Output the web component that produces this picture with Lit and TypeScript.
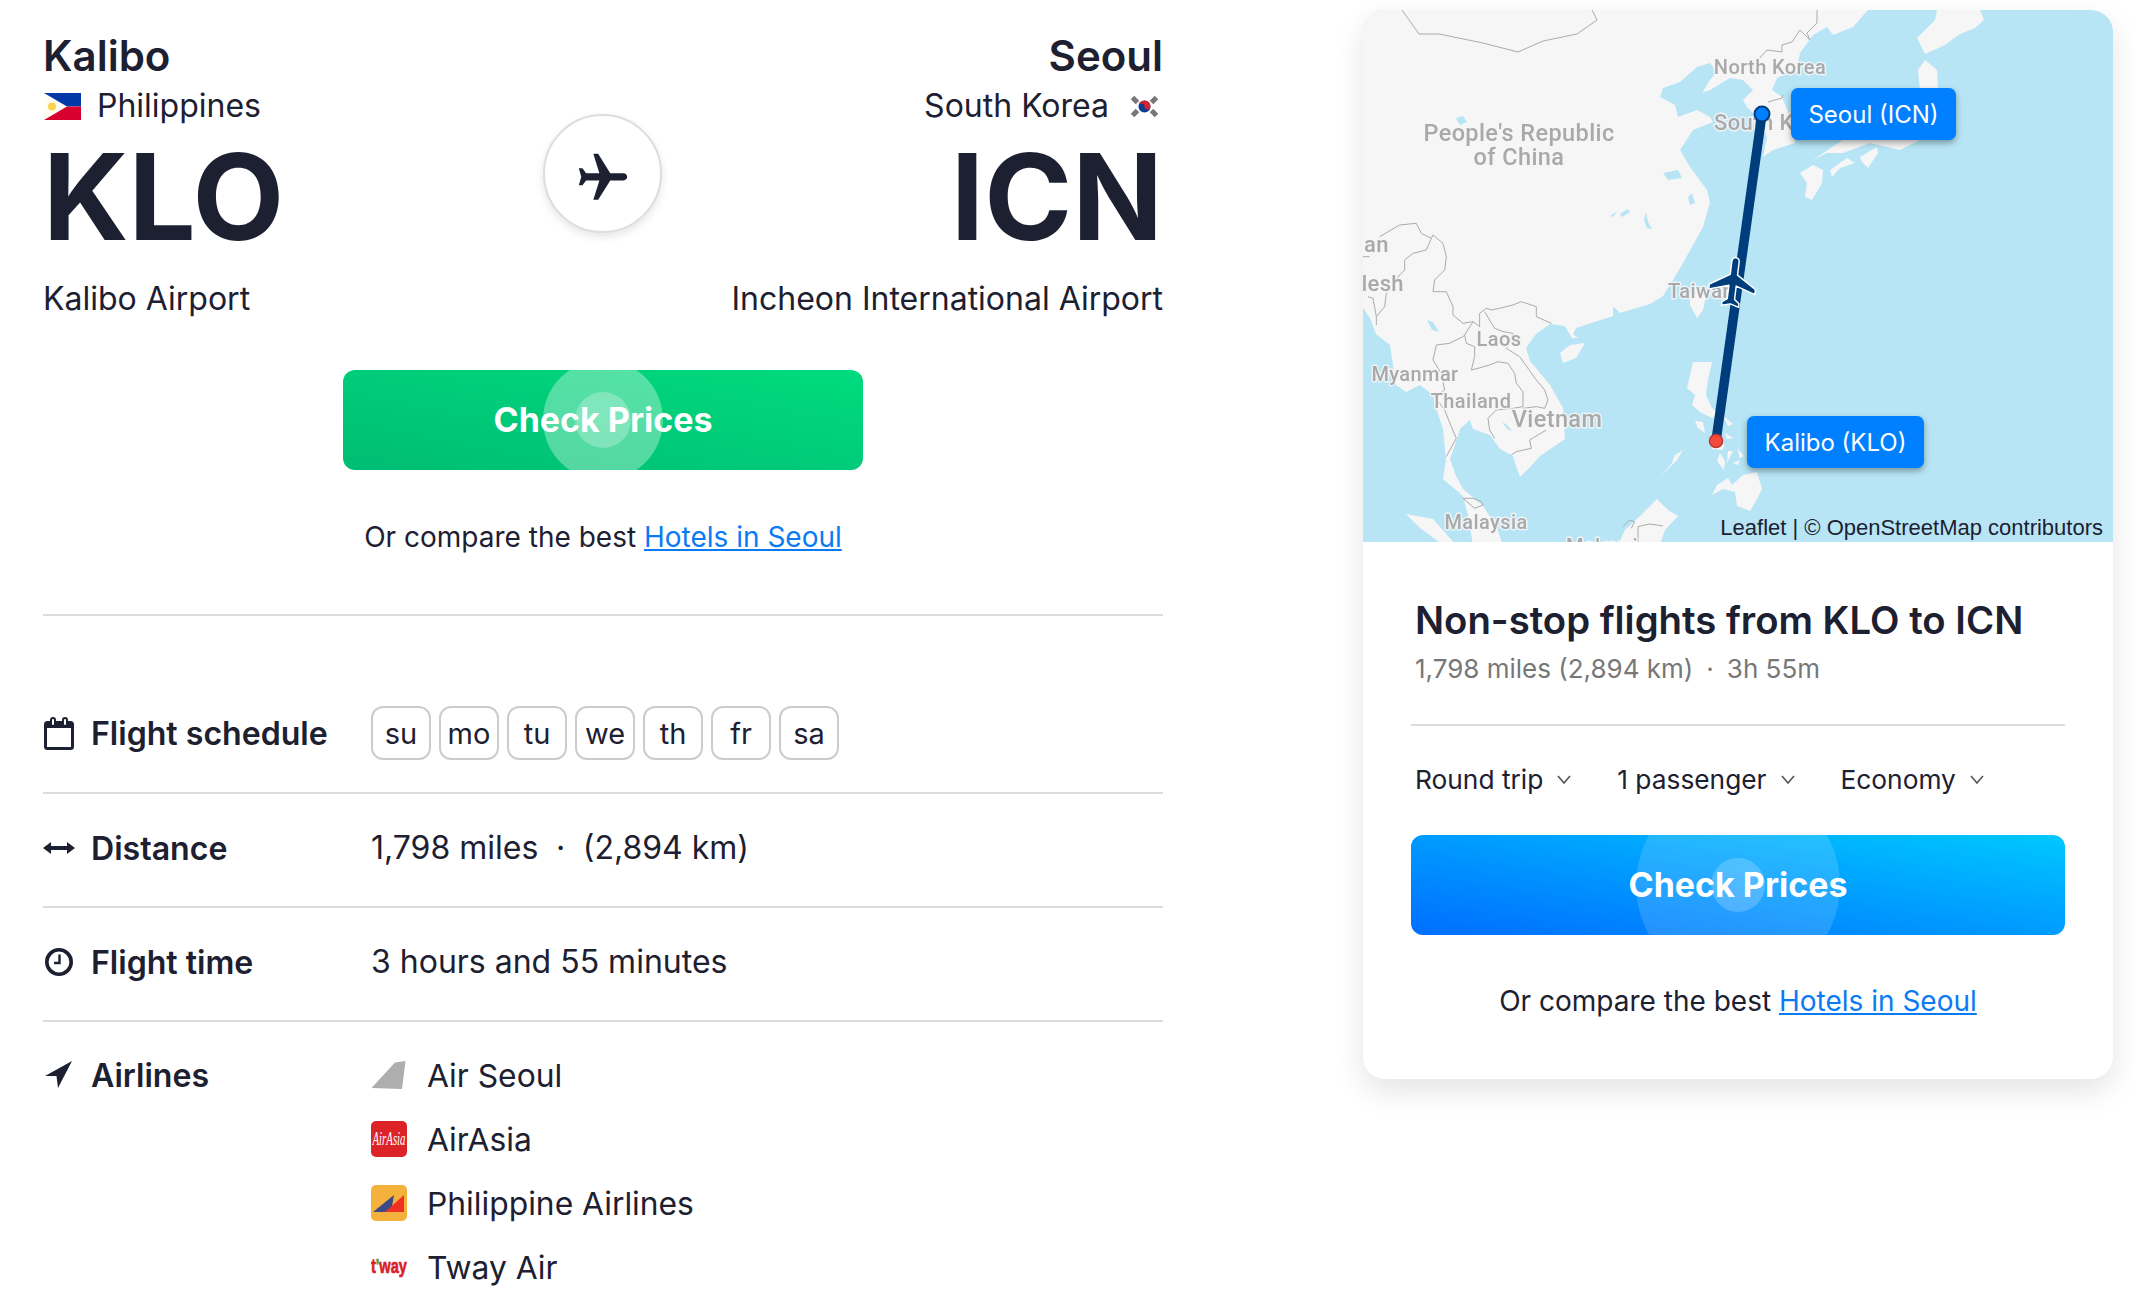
import { LitElement, html, css, svg } from "lit";
import { customElement } from "lit/decorators.js";

const PLANE = "M21 16v-2l-8-5V3.5c0-.83-.67-1.5-1.5-1.5S10 2.67 10 3.5V9l-8 5v2l8-2.5V19l-2 1.5V22l3.5-1 3.5 1v-1.5L13 19v-5.5l8 2.5z";

const LAND: string[] = [
  "1363,10 1868,10 1853,27 1833,35 1827,27 1813,35 1800,53 1797,67 1777,78 1772,90 1782,97 1790,117 1795,143 1773,150 1763,157 1767,137 1757,117 1747,107 1743,100 1753,90 1743,80 1730,78 1710,90 1702,93 1710,80 1717,72 1710,63 1697,67 1680,82 1663,88 1660,97 1675,105 1678,117 1697,110 1710,117 1713,122 1693,130 1680,150 1690,167 1707,190 1710,203 1703,227 1683,263 1673,280 1663,296 1650,304 1620,313 1613,306 1613,316 1576,328 1573,334 1578,338 1572,338 1565,326 1550,324 1536,334 1526,348 1530,361 1550,385 1563,408 1565,439 1540,456 1531,466 1520,477 1516,466 1513,456 1500,449 1490,435 1473,429 1470,420 1460,429 1456,442 1450,459 1456,476 1463,489 1483,506 1496,526 1503,545 1473,545 1468,515 1463,496 1443,479 1446,459 1443,429 1436,408 1433,395 1420,385 1406,392 1396,385 1390,345 1376,334 1370,318 1363,308",
  "1585,343 1576,358 1563,363 1560,353 1570,345",
  "1406,514 1433,519 1456,545 1443,545 1420,528",
  "1618,545 1625,530 1640,516 1657,499 1668,510 1678,516 1665,530 1660,545",
  "1693,362 1712,362 1708,380 1706,395 1712,408 1720,414 1712,418 1700,412 1692,405 1695,395 1687,388 1690,375",
  "1695,421 1703,422 1705,433 1698,428",
  "1712,440 1725,445 1722,450 1712,449",
  "1723,416 1733,424 1728,426",
  "1725,433 1733,438 1727,439",
  "1737,448 1744,456 1740,458",
  "1720,453 1717,461 1724,470 1725,461",
  "1728,451 1733,451 1727,463",
  "1733,463 1740,460 1738,465",
  "1712,495 1717,485 1728,478 1732,485 1743,475 1757,472 1762,489 1757,499 1750,511 1737,506 1735,492 1723,489",
  "1683,450 1677,460 1660,477 1672,463 1675,455",
  "1695,288 1706,296 1703,310 1697,318 1690,305 1690,295",
  "1800,173 1813,165 1823,170 1822,183 1812,200 1805,197 1807,183",
  "1813,160 1827,153 1843,153 1870,143 1900,150 1918,141 1945,100 1938,88 1937,70 1925,60 1918,70 1920,90 1905,110 1880,125 1850,135",
  "1830,170 1847,158 1855,163 1840,168 1832,177",
  "1860,157 1877,147 1878,153 1868,168 1862,162",
  "1937,10 1980,10 1984,20 1975,28 1960,34 1945,45 1925,54 1917,38 1925,30 1935,20",
];

const LAKES: string[] = [
  "1456,118 1463,116 1467,122 1460,125",
  "1611,215 1617,212 1612,218",
  "1620,214 1628,209 1630,212 1622,217",
  "1646,212 1648,222 1652,229 1647,228 1644,220",
  "1663,173 1678,170 1682,178 1668,180",
  "1688,197 1692,193 1695,203 1690,205",
  "1427,320 1433,322 1439,332 1432,330",
];

const BORDERS_Z9: string[] = [
  "50,110 110,75 160,70 175,100 205,115 210,105 240,130 250,170 245,210 215,240 210,275 250,275 270,320 270,345 300,370 330,365 305,405 300,410 260,430 220,435 210,480 235,520 245,570 215,590 245,630 265,680 280,715 250,770",
  "205,115 190,150 150,160 125,180 125,210 110,225 70,280 65,320 40,350 40,375",
  "15,290 30,295 40,350",
  "0,170 20,170",
  "330,365 350,380 350,340 370,325 385,330 410,325 450,315 475,305 520,320 520,350 565,370",
  "365,335 395,385 420,395 450,400 430,445 470,470 520,540 545,570 555,600 545,625 520,620 480,625",
  "305,405 310,430 335,440 335,470 325,510 345,505 380,495 405,485 435,490 455,520 460,550 480,575 480,620 450,625 400,630 375,655 380,690 395,715",
  "550,690 500,720 505,745 460,755 445,765",
  "300,895 330,895 355,905 360,915 335,925 300,895",
  "780,980 800,960 815,965 805,985",
  "825,1026 825,980 860,972 900,978",
];

const BORDERS_PAGE: string[] = [
  "1402,10 1419,34 1439,34 1483,43 1518,52 1543,41 1577,34 1597,20 1592,10",
  "1817,10 1817,23 1807,33 1810,40 1800,30 1792,42 1782,45 1782,52 1767,50 1758,60",
  "1768,102 1782,98 1783,95",
];

@customElement("flight-map")
class FlightMap extends LitElement {
  static styles = css`
    :host { display: block; position: relative; height: 532px; overflow: hidden; background: #b7e5f6; }
    svg.base { display: block; width: 750px; height: 532px; }
    .land { fill: #f6f6f6; }
    .lake { fill: #b7e5f6; }
    .border { fill: none; stroke: #ababab; stroke-width: 1; vector-effect: non-scaling-stroke; }
    .soft { filter: blur(0.35px); }
    .place {
      font-family: Roboto, sans-serif; font-weight: 500; font-size: 20px; letter-spacing: 0.4px;
      fill: #a9a9a9; stroke: rgba(246,246,246,.85); stroke-width: 3px; paint-order: stroke; stroke-linejoin: round;
    }
    .place.big { font-size: 23.5px; }
    .place.mid { font-size: 22px; }
    .route { stroke: #003d7c; stroke-width: 9.5; }
    .plane { fill: #003d7c; stroke: #fff; stroke-width: .6; stroke-linejoin: round; }
    .pill {
      position: absolute; display: flex; align-items: center; justify-content: center; height: 52px;
      background: #0080ff; color: #fff; border-radius: 7px; box-shadow: 0 3px 6px rgba(0,0,0,.35);
      font: 400 24px Inter, sans-serif; white-space: nowrap;
    }
    .seoul { left: 428px; top: 78px; width: 165px; }
    .kalibo { left: 384px; top: 406px; width: 177px; }
    .attr {
      position: absolute; right: 10px; bottom: 0; color: #1c2030;
      font: 400 22px/28px "Liberation Sans", sans-serif; white-space: nowrap;
    }
  `;
  render() {
    return html`
      <svg class="base" viewBox="1363 10 750 532">
        <g class="soft">
          ${LAND.map((p) => svg`<polygon class="land" points=${p}></polygon>`)}
          ${LAKES.map((p) => svg`<polygon class="lake" points=${p}></polygon>`)}
          ${BORDERS_PAGE.map((p) => svg`<polyline class="border" points=${p}></polyline>`)}
          <g transform="translate(1363 200) scale(.3333)">
            ${BORDERS_Z9.map((p) => svg`<polyline class="border" points=${p}></polyline>`)}
            <polygon class="lake" points="418,668 430,672 446,692 436,690"></polygon>
          </g>
          <text class="place big" x="1519" y="141" text-anchor="middle">People's Republic</text>
          <text class="place big" x="1519" y="165" text-anchor="middle">of China</text>
          <text class="place" x="1770" y="74" text-anchor="middle">North Korea</text>
          <text class="place mid" x="1714" y="130">South Korea</text>
          <text class="place mid" x="1389" y="252" text-anchor="end">Bhutan</text>
          <text class="place mid" x="1404" y="291" text-anchor="end">Bangladesh</text>
          <text class="place" x="1499" y="346" text-anchor="middle">Laos</text>
          <text class="place" x="1415" y="381" text-anchor="middle">Myanmar</text>
          <text class="place" x="1471" y="408" text-anchor="middle">Thailand</text>
          <text class="place big" x="1557" y="427" text-anchor="middle">Vietnam</text>
          <text class="place" x="1486" y="529" text-anchor="middle">Malaysia</text>
          <text class="place" x="1566" y="553">Malaysia</text>
          <text class="place" x="1668" y="298">Taiwan</text>
        </g>
        <line class="route" x1="1716" y1="441" x2="1762" y2="114"></line>
        <circle cx="1762" cy="114" r="7.5" fill="#0080ff" stroke="#003d7c" stroke-width="2"></circle>
        <circle cx="1716" cy="441" r="6.5" fill="#f4493d" stroke="#c0392f" stroke-width="1.5"></circle>
        <g transform="translate(1733 282) rotate(7) scale(2.45) translate(-11.5 -12)">
          <path class="plane" d=${PLANE}></path>
        </g>
      </svg>
      <div class="pill seoul">Seoul (ICN)</div>
      <div class="pill kalibo">Kalibo (KLO)</div>
      <div class="attr">Leaflet | © OpenStreetMap contributors</div>
    `;
  }
}

@customElement("cta-button")
class CtaButton extends LitElement {
  static styles = css`
    :host { display: block; }
    button {
      position: relative; display: flex; align-items: center; justify-content: center; width: 100%; height: 100px;
      border: 0; border-radius: 12px; overflow: hidden; color: #fff; padding: 0;
      font: 700 34px Inter, sans-serif; cursor: pointer;
    }
    button.green { background: linear-gradient(to top right, #00bd73, #00db7e); }
    button.blue { background: linear-gradient(to top right, #006eff, #00c8ff); }
    .ring { position: absolute; left: 50%; top: 50%; border-radius: 50%; transform: translate(-50%, -50%); }
    .green .outer { width: 120px; height: 120px; background: rgba(255,255,255,.33); }
    .green .inner { width: 56px; height: 56px; background: rgba(255,255,255,.26); }
    .blue .outer { width: 204px; height: 204px; background: rgba(255,255,255,.14); }
    .blue .inner { width: 54px; height: 54px; background: rgba(255,255,255,.2); }
    span.label { position: relative; top: -1px; }
  `;
  static properties = { tone: { type: String } };
  tone = "green";
  render() {
    return html`<button class=${this.tone}>
      <span class="ring outer"></span><span class="ring inner"></span>
      <span class="label">Check Prices</span>
    </button>`;
  }
}

@customElement("app-root")
class AppRoot extends LitElement {
  static styles = css`
    :host {
      display: block; width: 2134px; height: 1304px; overflow: hidden; background: #fff;
      color: #1c2030; font-family: Inter, sans-serif;
    }
    .page { display: flex; padding-left: 43px; }
    .left { width: 1120px; flex: none; padding-top: 31px; }
    .route { display: grid; grid-template-columns: 1fr 120px 1fr; }
    .side.end { text-align: right; }
    .city { font-size: 42px; line-height: 50px; font-weight: 600; }
    .country { display: flex; align-items: center; gap: 17px; font-size: 32px; line-height: 40px; margin-top: 5px; }
    .country .ph { margin-left: 1px; }
    .side:not(.end) .country { gap: 16px; }
    .end .country { justify-content: flex-end; gap: 17px; }
    .code { font-size: 119px; line-height: 120px; font-weight: 700; margin-top: 11px; }
    .airport { font-size: 32px; line-height: 40px; margin-top: 22px; white-space: nowrap; }
    .hub {
      width: 119px; height: 119px; box-sizing: border-box; margin: 83px 0 0 0; border-radius: 50%;
      border: 2px solid #ddd; background: #fff; box-shadow: 0 4px 9px rgba(0,0,0,.1);
      display: flex; align-items: center; justify-content: center;
    }
    .hub svg { width: 58px; height: 58px; fill: #1c2030; margin-top: 9px; }
    .cta { width: 520px; margin: 51px auto 0; }
    .more { text-align: center; font-size: 28px; line-height: 40px; margin-top: 47px; }
    .more a { color: #0a7bf5; text-decoration: underline; }
    .rule { height: 2px; background: #ddd; margin-top: 57px; }
    .rows { margin-top: 64px; }
    .row { display: flex; padding: 26px 0 32px; border-bottom: 2px solid #ddd; }
    .row:last-child { border-bottom: 0; }
    .key { width: 328px; flex: none; display: flex; align-items: center; height: 54px; font-size: 32.1px; font-weight: 600; }
    .row.text .key, .row.text .val { position: relative; top: 1px; }
    .icon { width: 48px; flex: none; display: flex; align-items: center; }
    .icon .cal { margin-left: 1px; }
    .val { font-size: 32px; line-height: 54px; }
    .dot { margin: 0 .55em; }
    .days { display: flex; gap: 8px; }
    .day {
      width: 60px; height: 54px; box-sizing: border-box; border: 2px solid #ccc; border-radius: 12px;
      display: flex; align-items: center; justify-content: center; font-size: 29px;
    }
    .airlines { display: flex; flex-direction: column; gap: 10px; }
    .airline { display: flex; align-items: center; height: 54px; gap: 20px; font-size: 31.8px; }
    .airline svg { width: 36px; height: 36px; flex: none; display: block; }
    .card {
      width: 750px; height: 1069px; flex: none; margin: 10px 0 0 200px; border-radius: 22px; overflow: hidden;
      background: #fff; box-shadow: 0 12px 30px rgba(0,0,0,.11);
    }
    .body { padding: 53px 48px 0; }
    .title { font-size: 38.3px; line-height: 50px; font-weight: 600; margin-left: 4px; white-space: nowrap; }
    .sub { font-size: 26px; line-height: 36px; color: #777; margin: 6px 0 0 4px; }
    .sub .dot { margin: 0 .5em; }
    .body .rule { margin-top: 37px; }
    .opts { display: flex; align-items: center; height: 36px; margin: 36px 0 37px 4px; font-size: 26.3px; position: relative; top: -1px; }
    .opt { display: flex; align-items: center; gap: 14px; margin-right: 46px; white-space: nowrap; }
    .opt svg { width: 14px; height: 9px; fill: none; stroke: #555; stroke-width: 1.6; }
    .card .more { margin-top: 46px; }
  `;

  private days = ["su", "mo", "tu", "we", "th", "fr", "sa"];

  private flagPH() {
    return html`<svg class="ph" width="37" height="27" viewBox="0 0 37 27" style="flex:none">
      <rect width="37" height="13.5" fill="#0038a8"></rect>
      <rect y="13.5" width="37" height="13.5" fill="#d8002f"></rect>
      <polygon points="0,0 23,13.5 0,27" fill="#fdfdf5"></polygon>
      <circle cx="8" cy="13.5" r="4" fill="#fcd34d"></circle>
    </svg>`;
  }

  private flagKR() {
    const bars = [[9, 7, 45], [28, 7, -45], [9, 20, -45], [28, 20, 45]];
    return html`<svg width="37" height="27" viewBox="0 0 37 27" style="flex:none">
      <rect width="37" height="27" fill="#fff"></rect>
      ${bars.map(([x, y, r]) => svg`<rect x=${x - 3.5} y=${y - 2.5} width="7" height="5" fill="#777" transform="rotate(${r} ${x} ${y})"></rect>`)}
      <circle cx="18.5" cy="13.5" r="6" fill="#0b3d91"></circle>
      <path d="M12.5 13.5a6 6 0 0 1 12 0 3 3 0 0 1-6 0 3 3 0 0 0-6 0z" fill="#d8232f"></path>
    </svg>`;
  }

  private chevron() {
    return html`<svg viewBox="0 0 14 9"><path d="M1 1l6 7 6-7"></path></svg>`;
  }

  render() {
    return html`
      <div class="page">
        <div class="left">
          <div class="route">
            <div class="side">
              <div class="city">Kalibo</div>
              <div class="country">${this.flagPH()}<span>Philippines</span></div>
              <div class="code">KLO</div>
              <div class="airport">Kalibo Airport</div>
            </div>
            <div class="hub"><svg viewBox="0 0 24 24"><path transform="rotate(90 12 12)" d=${PLANE}></path></svg></div>
            <div class="side end">
              <div class="city">Seoul</div>
              <div class="country"><span>South Korea</span>${this.flagKR()}</div>
              <div class="code">ICN</div>
              <div class="airport">Incheon International Airport</div>
            </div>
          </div>
          <div class="cta"><cta-button tone="green"></cta-button></div>
          <div class="more">Or compare the best <a href="#">Hotels in Seoul</a></div>
          <div class="rule"></div>
          <div class="rows">
            <div class="row">
              <div class="key">
                <span class="icon"><svg class="cal" width="30" height="33" viewBox="0 0 30 33">
                  <rect x="1.5" y="5.5" width="27" height="26" rx="2" fill="none" stroke="#1c2030" stroke-width="3"></rect>
                  <rect x="1.5" y="5.5" width="27" height="5.5" fill="#1c2030"></rect>
                  <rect x="7" y="1" width="4" height="8" rx="2" fill="#fff" stroke="#1c2030" stroke-width="2"></rect>
                  <rect x="19" y="1" width="4" height="8" rx="2" fill="#fff" stroke="#1c2030" stroke-width="2"></rect>
                </svg></span>Flight schedule
              </div>
              <div class="days">${this.days.map((d) => html`<div class="day">${d}</div>`)}</div>
            </div>
            <div class="row text">
              <div class="key">
                <span class="icon"><svg width="32" height="14" viewBox="0 0 32 14">
                  <path d="M6 7h20" stroke="#1c2030" stroke-width="4"></path>
                  <path d="M0 7l8-6v12zM32 7l-8-6v12z" fill="#1c2030"></path>
                </svg></span>Distance
              </div>
              <div class="val">1,798 miles<span class="dot">·</span>(2,894 km)</div>
            </div>
            <div class="row text">
              <div class="key">
                <span class="icon"><svg width="30" height="30" viewBox="0 0 30 30" style="margin-left:1px">
                  <circle cx="15" cy="15" r="12.2" fill="none" stroke="#1c2030" stroke-width="3.6"></circle>
                  <path d="M15.5 7.5v8.5H10" fill="none" stroke="#1c2030" stroke-width="2.4"></path>
                </svg></span>Flight time
              </div>
              <div class="val">3 hours and 55 minutes</div>
            </div>
            <div class="row">
              <div class="key">
                <span class="icon"><svg width="28" height="28" viewBox="0 0 28 28" style="margin-left:2px">
                  <path d="M27 0L0 15h11.5l1.5 12z" fill="#1c2030"></path>
                </svg></span>Airlines
              </div>
              <div class="airlines">
                <div class="airline">
                  <svg viewBox="0 0 36 36"><polygon points="34.5,4 24,5.5 .5,31 31,32" fill="#aeaeae"></polygon></svg>
                  Air Seoul
                </div>
                <div class="airline">
                  <svg viewBox="0 0 36 36">
                    <rect width="36" height="36" rx="5" fill="#dc2328"></rect>
                    <text x="18" y="24" text-anchor="middle" fill="#fff" textLength="33" lengthAdjust="spacingAndGlyphs"
                      style="font: italic 400 19px 'Liberation Serif', serif">AirAsia</text>
                  </svg>
                  AirAsia
                </div>
                <div class="airline">
                  <svg viewBox="0 0 36 36">
                    <rect width="36" height="36" rx="5" fill="#f4b13c"></rect>
                    <polygon points="2,27 23,10 20,27" fill="#3d4a8a"></polygon>
                    <polygon points="14,27 33,10 33,27" fill="#ee3124"></polygon>
                  </svg>
                  Philippine Airlines
                </div>
                <div class="airline">
                  <svg viewBox="0 0 36 36">
                    <text x="0" y="24" textLength="36" lengthAdjust="spacingAndGlyphs" stroke="#d7202a" stroke-width=".7"
                      style="font: 700 21px 'Liberation Sans', sans-serif" fill="#d7202a">t<tspan fill="#5aa02c" stroke="#5aa02c">'</tspan>way</text>
                  </svg>
                  Tway Air
                </div>
              </div>
            </div>
          </div>
        </div>
        <div class="card">
          <flight-map></flight-map>
          <div class="body">
            <div class="title">Non-stop flights from KLO to ICN</div>
            <div class="sub">1,798 miles (2,894 km)<span class="dot">·</span>3h 55m</div>
            <div class="rule"></div>
            <div class="opts">
              <div class="opt">Round trip ${this.chevron()}</div>
              <div class="opt">1 passenger ${this.chevron()}</div>
              <div class="opt">Economy ${this.chevron()}</div>
            </div>
            <cta-button tone="blue"></cta-button>
            <div class="more">Or compare the best <a href="#">Hotels in Seoul</a></div>
          </div>
        </div>
      </div>
    `;
  }
}
